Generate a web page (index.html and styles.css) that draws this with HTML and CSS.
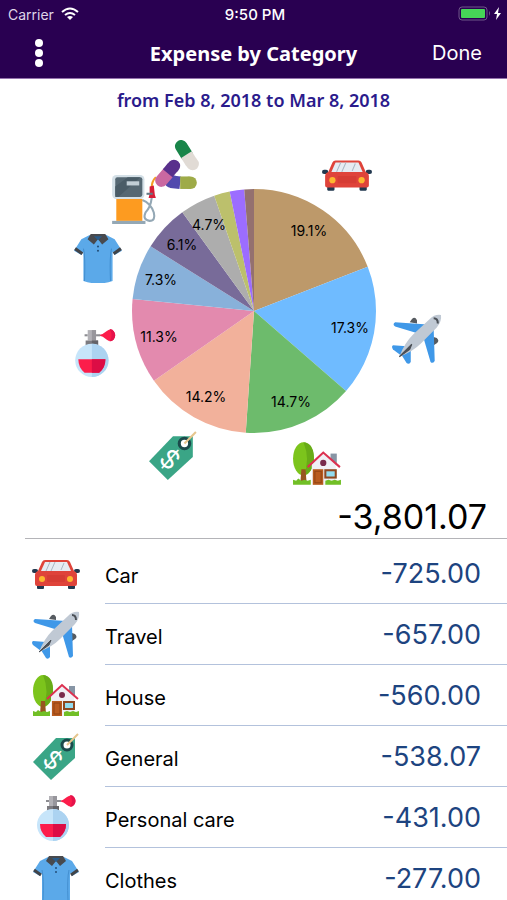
FILE: index.html
```html
<!DOCTYPE html>
<html lang="en">
<head>
  <meta charset="UTF-8">
  <meta name="viewport" content="width=device-width, initial-scale=1.0">
  <title>Expense by Category</title>
  <link rel="stylesheet" href="styles.css">
</head>
<body>
<!-- Category icons -->
<svg class="sprite" aria-hidden="true">
  <symbol id="car" viewBox="0 0 48 48">
    <rect x="5" y="34" width="7" height="5" rx="1" fill="#22384f"/>
    <rect x="36" y="34" width="7" height="5" rx="1" fill="#22384f"/>
    <rect x="0" y="19" width="6" height="4" rx="2" fill="#22384f"/>
    <rect x="42" y="19" width="6" height="4" rx="2" fill="#22384f"/>
    <path d="M13 10h22q2 0 3 2l4 9q3 1 3 4v9q0 2-2 2H5q-2 0-2-2v-9q0-3 3-4l4-9q1-2 3-2z" fill="#df433a"/>
    <path d="M13 12h22l4 9H9z" fill="#e6ebf2"/>
    <path d="M18 12l-4 9M23 12l-4 9M32 13l-3 7" stroke="#aab6c4" stroke-width="1"/>
    <rect x="15" y="25" width="18" height="7" rx="1" fill="#d63c34"/>
    <circle cx="10" cy="29" r="3" fill="#fdb62f"/>
    <circle cx="38" cy="29" r="3" fill="#fdb62f"/>
  </symbol>
  <symbol id="plane" viewBox="0 0 48 48">
    <path d="M17 8l2-3q3-3 5 1v3zM40 22l3 1q3 3 0 5l-3 2z" fill="#565b60"/>
    <path d="M3 8l31 2-8 9L3 12q-3-2 0-4z" fill="#3f98e8"/>
    <path d="M40 14l1 31q-2 3-4 1l-7-24z" fill="#3f98e8"/>
    <path d="M1 30l13 1-5 9-8-6q-2-3 0-4z" fill="#3f98e8"/>
    <path d="M18 34v12q-2 3-4 1l-5-8z" fill="#3f98e8"/>
    <path d="M7 41q5-13 13-21L36 5q5-5 11-4 1 6-4 12L28 28Q20 36 7 41z" fill="#c0c9d4"/>
    <path d="M7 41l12-12-2 5z" fill="#4b5057" stroke="#4b5057" stroke-width="1"/>
    <path d="M40 4q4 0 4 5" fill="none" stroke="#4b5057" stroke-width="2"/>
  </symbol>
  <symbol id="house" viewBox="0 0 48 48">
    <ellipse cx="11" cy="19" rx="10" ry="16" fill="#7cc41c"/>
    <path d="M11 3q11 1 10 18-2 12-10 14 7-15 0-32z" fill="#68ac17"/>
    <path d="M9 29h4l1 13H8z" fill="#98551f"/>
    <rect x="37" y="14" width="6" height="11" fill="#8795a5"/>
    <path d="M19 24l11-10 12 10v20H19z" fill="#f0f0f5"/>
    <path d="M15 27l15-14 16 14" fill="none" stroke="#dc3150" stroke-width="2"/>
    <circle cx="30" cy="23" r="3" fill="#792b4c"/>
    <rect x="20" y="29" width="10" height="15" fill="#b95b1f"/>
    <path d="M22 31h6v11h-6z" fill="none" stroke="#914414"/>
    <rect x="32" y="30" width="10" height="7" fill="#93dcef" stroke="#8f4820" stroke-width="2"/>
    <path d="M1 44v-5l3 1 2-2 3 2 3-1 3 1 3-1v5zM32 44v-4l3-1 3 1 3-1 3 1 3-1v5z" fill="#71bf26"/>
  </symbol>
  <symbol id="tag" viewBox="0 0 48 48">
    <path d="M24 5h19v20L19 47 1 29z" fill="#3aa586"/>
    <circle cx="35" cy="12" r="5" fill="#fff" stroke="#1b4a4b" stroke-width="3"/>
    <path d="M35 12L46 1" stroke="#e6c58d" stroke-width="2"/>
    <text class="tag-sign" transform="translate(21 27) rotate(42)" dy="9">$</text>
  </symbol>
  <symbol id="perfume" viewBox="0 0 48 48">
    <path d="M27 7q5-1 8-4 4-3 7 0 3 4 0 8-3 3-7 0-3-3-8-4z" fill="#fc1d4b"/>
    <path d="M38 1q3 0 4 2 3 4 0 8-2 2-4 2 4-6 0-12z" fill="#e5134b"/>
    <rect x="14" y="6" width="3" height="2" fill="#8c8c91"/>
    <rect x="25" y="6" width="4" height="2" fill="#8c8c91"/>
    <rect x="17" y="2" width="8" height="10" fill="#b2b1b6"/>
    <rect x="21" y="2" width="4" height="10" fill="#97969c"/>
    <rect x="15" y="12" width="12" height="6" fill="#7c7b80"/>
    <rect x="21" y="12" width="6" height="6" fill="#646368"/>
    <circle cx="21" cy="31" r="16" fill="#c7e5fa"/>
    <path d="M21 15a16 16 0 0 1 0 32z" fill="#acd3f1"/>
    <path d="M8 30h26q0 8-6 13H14q-6-5-6-13z" fill="#fc1d4b"/>
    <path d="M21 30h13q0 8-6 13h-7z" fill="#dc0d45"/>
  </symbol>
  <symbol id="shirt" viewBox="0 0 48 48">
    <path d="M16 2q8 4 16 0l8 4 7 11-7 4-2-3v28q-14 5-28 0V18l-2 3-7-4L8 6z" fill="#5ba9e9"/>
    <path d="M10 15q2 8 1 31" fill="none" stroke="#438fd0" stroke-width="1"/>
    <path d="M37 15q-2 8-1 31" fill="none" stroke="#438fd0" stroke-width="1"/>
    <path d="M2 15l7 5M46 15l-7 5" stroke="#424448" stroke-width="3"/>
    <path d="M17 1h14l3 5-6 5-4-5-4 5-6-5z" fill="#484a4e"/>
    <path d="M20 3h8l-4 4z" fill="#285c8c"/>
    <circle cx="24" cy="13" r="1" fill="#234f78"/>
    <circle cx="24" cy="17" r="1" fill="#234f78"/>
  </symbol>
  <symbol id="fuel" viewBox="0 0 48 48">
    <path d="M32 25q8 3 11 12 2 8-4 8-7-1-4-8 5-5 6-14" fill="none" stroke="#94a8b5" stroke-width="2"/>
    <path d="M41 13q0-6 4-10" fill="none" stroke="#f49d25" stroke-width="2"/>
    <path d="M39 12l4-1 1 9 1 3h-7l1-4z" fill="#d71f38"/>
    <path d="M36 19h6" stroke="#657986" stroke-width="2"/>
    <rect x="3" y="1" width="31" height="23" rx="4" fill="#d4e0e7"/>
    <rect x="6" y="3" width="26" height="19" rx="2" fill="#566873"/>
    <path d="M6 22V12L18 3h12L9 22z" fill="#4a5c67"/>
    <rect x="17" y="7" width="12" height="4" fill="#c1ced6"/>
    <rect x="7" y="24" width="25" height="21" fill="#fd9b20"/>
    <rect x="3" y="45" width="32" height="3" fill="#94a8b5"/>
  </symbol>
  <symbol id="pills" viewBox="0 0 48 48">
    <g fill="none" stroke-width="12">
      <path d="M29 6l5 8" stroke="#198549" stroke-linecap="round"/>
      <path d="M39 22l1 1" stroke="#e1dbd5" stroke-linecap="round"/>
      <path d="M34 14l5 8" stroke="#e1dbd5"/>
      <path d="M19 40h3" stroke="#5149ae" stroke-linecap="round"/>
      <path d="M37 41h1" stroke="#9eab48" stroke-linecap="round"/>
      <path d="M19 40l9 1" stroke="#5149ae"/>
      <path d="M28 41h9" stroke="#9eab48"/>
      <path d="M10 39l6-7" stroke="#ca68a1" stroke-linecap="round"/>
      <path d="M21 26l1-1" stroke="#59308c" stroke-linecap="round"/>
      <path d="M16 32l5-6" stroke="#59308c"/>
    </g>
  </symbol>
</svg>

<header class="top-bar">
  <div class="status">
    <div class="carrier">
      <span>Carrier</span>
      <svg class="wifi" viewBox="0 0 18 14" aria-hidden="true">
        <path d="M1 5q8-7 16 0M4 8q5-4 10 0" fill="none" stroke="#fff" stroke-width="2"/>
        <path d="M6 10q3-2 6 0l-3 3z" fill="#fff"/>
      </svg>
    </div>
    <span class="clock">9:50 PM</span>
    <svg class="battery" viewBox="0 0 44 16" aria-hidden="true">
      <rect x="1" y="1" width="28" height="13" rx="3" fill="none" stroke="#6f5689"/>
      <rect x="3" y="3" width="24" height="9" rx="1" fill="#46d657"/>
      <path d="M31 5q2 2 0 5z" fill="#6f5689"/>
      <path d="M41 1l-5 7h3l-1 6 5-7h-3z" fill="#fff"/>
    </svg>
  </div>
  <nav class="nav">
    <button class="menu-btn" type="button" aria-label="Menu">
      <svg viewBox="0 0 8 28" aria-hidden="true">
        <g fill="#fff"><circle cx="4" cy="4" r="4"/><circle cx="4" cy="14" r="4"/><circle cx="4" cy="24" r="4"/></g>
      </svg>
    </button>
    <h1>Expense by Category</h1>
    <button class="done-btn" type="button">Done</button>
  </nav>
</header>

<main>
  <p class="period">from Feb 8, 2018 to Mar 8, 2018</p>

  <svg class="chart" viewBox="-254 -190 507 374" role="img" aria-label="Expenses by category">
    <!-- each slice is a dash on a 100 unit long circle -->
    <g class="slices" transform="rotate(-90)">
      <circle r="61" pathLength="100" stroke="#bd996a" stroke-dasharray="19.1 100"/>
      <circle r="61" pathLength="100" stroke="#6fbbff" stroke-dasharray="17.3 100" stroke-dashoffset="-19.1"/>
      <circle r="61" pathLength="100" stroke="#6dbb6c" stroke-dasharray="14.7 100" stroke-dashoffset="-36.4"/>
      <circle r="61" pathLength="100" stroke="#f2b19b" stroke-dasharray="14.2 100" stroke-dashoffset="-51.1"/>
      <circle r="61" pathLength="100" stroke="#e38aae" stroke-dasharray="11.3 100" stroke-dashoffset="-65.3"/>
      <circle r="61" pathLength="100" stroke="#88b1da" stroke-dasharray="7.3 100" stroke-dashoffset="-76.6"/>
      <circle r="61" pathLength="100" stroke="#786b99" stroke-dasharray="6.1 100" stroke-dashoffset="-83.9"/>
      <circle r="61" pathLength="100" stroke="#adadad" stroke-dasharray="4.7 100" stroke-dashoffset="-90"/>
      <circle r="61" pathLength="100" stroke="#bcc06c" stroke-dasharray="2.1 100" stroke-dashoffset="-94.7"/>
      <circle r="61" pathLength="100" stroke="#9c6dff" stroke-dasharray="1.9 100" stroke-dashoffset="-96.8"/>
      <circle r="61" pathLength="100" stroke="#94706f" stroke-dasharray="1.3 100" stroke-dashoffset="-98.7"/>
    </g>
    <g class="slice-labels">
      <text x="55" y="-75">19.1%</text>
      <text x="96" y="22">17.3%</text>
      <text x="37" y="96">14.7%</text>
      <text x="-48" y="91">14.2%</text>
      <text x="-95" y="31">11.3%</text>
      <text x="-93" y="-26">7.3%</text>
      <text x="-72" y="-61">6.1%</text>
      <text x="-45" y="-81">4.7%</text>
    </g>
    <use href="#car" x="68" y="-161" width="50" height="50"/>
    <use href="#plane" x="138" y="3" width="50" height="50"/>
    <use href="#house" x="38" y="128" width="50" height="50"/>
    <use href="#tag" x="-106" y="120" width="50" height="50"/>
    <use href="#perfume" x="-184" y="17" width="50" height="50"/>
    <use href="#shirt" x="-181" y="-78" width="50" height="50"/>
    <use href="#fuel" x="-145" y="-137" width="50" height="50"/>
    <use href="#pills" x="-103" y="-171" width="50" height="50"/>
  </svg>

  <p class="total">-3,801.07</p>

  <ul class="categories">
    <li>
      <svg class="icon" aria-hidden="true"><use href="#car"/></svg>
      <div class="entry"><span class="name">Car</span><span class="amount">-725.00</span></div>
    </li>
    <li>
      <svg class="icon" aria-hidden="true"><use href="#plane"/></svg>
      <div class="entry"><span class="name">Travel</span><span class="amount">-657.00</span></div>
    </li>
    <li>
      <svg class="icon" aria-hidden="true"><use href="#house"/></svg>
      <div class="entry"><span class="name">House</span><span class="amount">-560.00</span></div>
    </li>
    <li>
      <svg class="icon" aria-hidden="true"><use href="#tag"/></svg>
      <div class="entry"><span class="name">General</span><span class="amount">-538.07</span></div>
    </li>
    <li>
      <svg class="icon" aria-hidden="true"><use href="#perfume"/></svg>
      <div class="entry"><span class="name">Personal care</span><span class="amount">-431.00</span></div>
    </li>
    <li>
      <svg class="icon" aria-hidden="true"><use href="#shirt"/></svg>
      <div class="entry"><span class="name">Clothes</span><span class="amount">-277.00</span></div>
    </li>
  </ul>
</main>
</body>
</html>
```

FILE: styles.css
```css
* {
  box-sizing: border-box;
}
body {
  margin: 0;
  height: 100vh;
  display: flex;
  flex-direction: column;
  font-family: Inter, "Liberation Sans", sans-serif;
  background: #fff;
  color: #000;
}
.sprite {
  display: none;
}
button {
  background: none;
  border: none;
  padding: 0;
  color: #fff;
  font-family: inherit;
  cursor: pointer;
}

/* Top bar */
.top-bar {
  flex: none;
  background: #290051;
  color: #fff;
  border-bottom: 1px solid #9472ad;
}
.status {
  display: grid;
  grid-template-columns: 1fr auto 1fr;
  align-items: center;
  height: 28px;
  padding: 0 5px 0 8px;
  font-size: 14px;
}
.carrier {
  display: flex;
  align-items: center;
  gap: 7px;
  color: #dfd5e8;
}
.wifi {
  width: 18px;
  height: 14px;
}
.clock {
  font-size: 15px;
  font-weight: 500;
}
.battery {
  justify-self: end;
  width: 44px;
  height: 16px;
}
.nav {
  display: grid;
  grid-template-columns: 1fr auto 1fr;
  align-items: center;
  height: 50px;
  padding: 0 25px;
}
.menu-btn {
  justify-self: start;
  width: 28px;
  height: 28px;
}
.menu-btn svg {
  display: block;
  width: 8px;
  height: 28px;
  margin: 0 auto;
}
.nav h1 {
  margin: 0;
  font-family: "Chalkboard SE", "Comic Sans MS", "Noto Sans", sans-serif;
  font-size: 20px;
  font-weight: 700;
}
.done-btn {
  justify-self: end;
  font-size: 20px;
}

/* Chart */
main {
  flex: 1;
  min-height: 0;
  overflow-y: auto;
  scrollbar-width: none;
}
.period {
  margin: 0;
  line-height: 42px;
  text-align: center;
  font-family: "Chalkboard SE", "Comic Sans MS", "Noto Sans", sans-serif;
  font-size: 18px;
  font-weight: 600;
  color: #2b1b8c;
}
.chart {
  display: block;
  width: 100%;
  max-width: 600px;
  margin: 0 auto;
}
.slices circle {
  fill: none;
  stroke-width: 122px;
}
.slice-labels {
  font-size: 14px;
  text-anchor: middle;
}
.tag-sign {
  fill: #fff;
  font-size: 25px;
  text-anchor: middle;
}

/* Totals */
.total {
  margin: 0 0 4px 25px;
  padding-right: 20px;
  border-bottom: 1px solid #b4b4b8;
  line-height: 43px;
  font-size: 34px;
  text-align: right;
}
.categories {
  list-style: none;
  margin: 0;
  padding: 0;
}
.categories li {
  display: flex;
  align-items: center;
  gap: 25px;
  padding-left: 32px;
}
.icon {
  flex: none;
  width: 48px;
  height: 48px;
}
.entry {
  flex: 1;
  display: flex;
  justify-content: space-between;
  align-items: baseline;
  height: 61px;
  padding-right: 26px;
  border-bottom: 1px solid #b3c2dc;
  line-height: 62px;
}
.name {
  font-size: 20px;
}
.amount {
  font-size: 27px;
  color: #1d4480;
}
```
